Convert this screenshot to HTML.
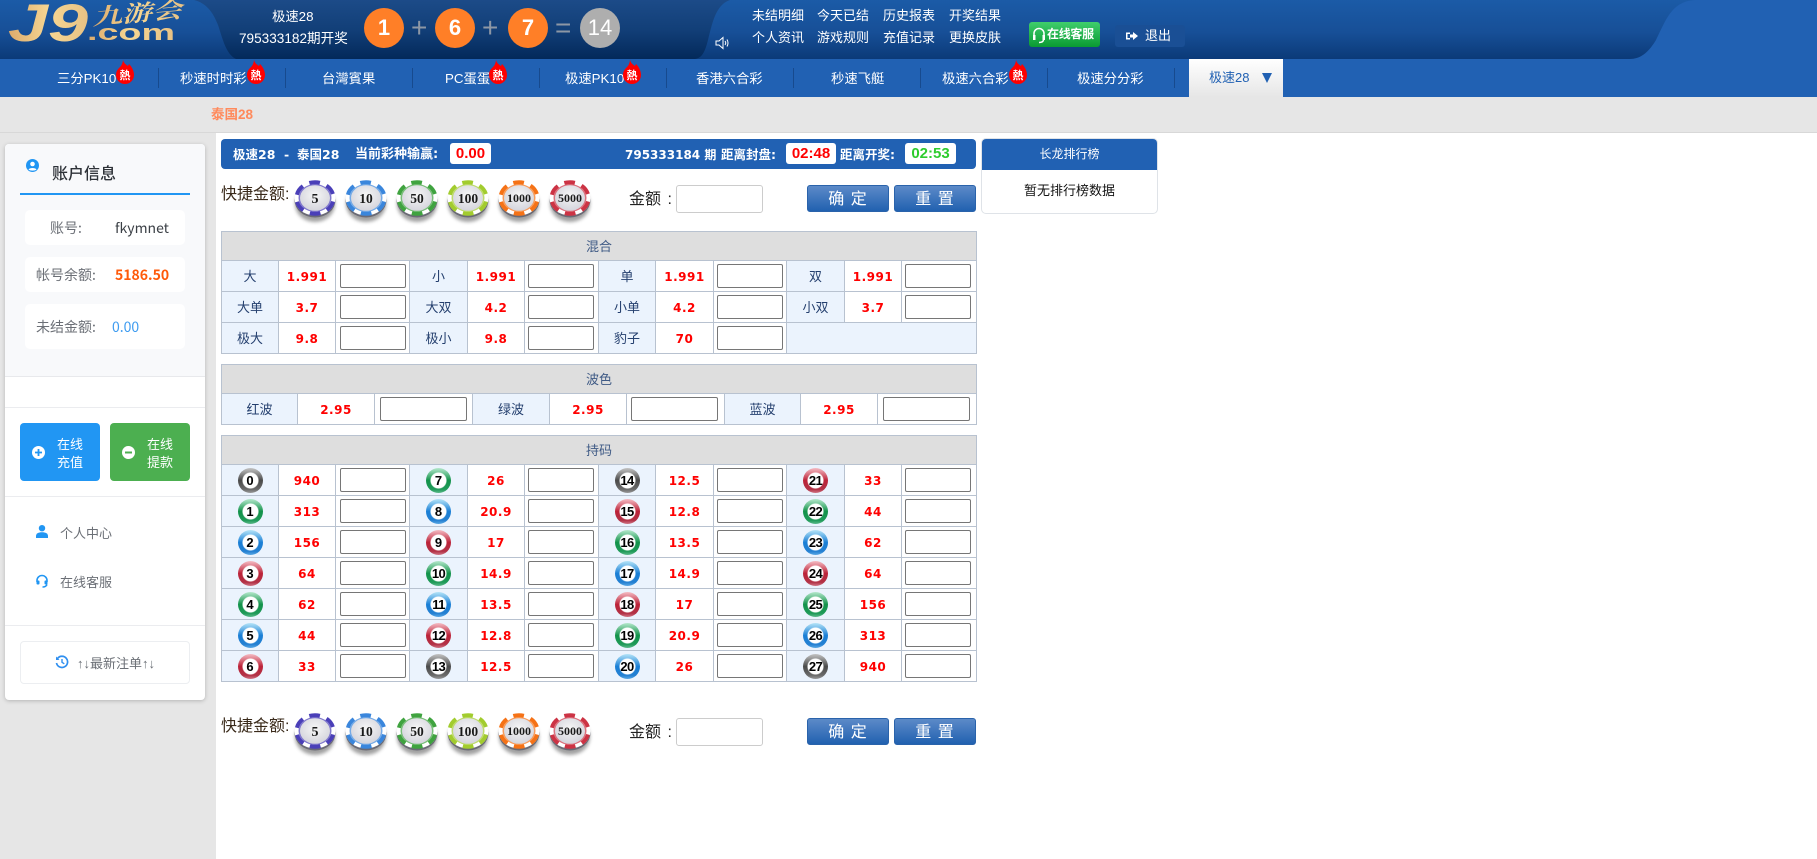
<!DOCTYPE html>
<html lang="zh"><head><meta charset="utf-8"><title>极速28</title>
<style>
*{box-sizing:border-box}
html,body{margin:0;padding:0}
body{width:1817px;height:859px;overflow:hidden;position:relative;background:#e6e6e6;font-family:"Liberation Sans","Noto Sans CJK SC",sans-serif;font-size:13px;color:#333}
.a{position:absolute;white-space:nowrap}
.w{color:#fff}
.hb{position:absolute;top:8px;width:40px;height:40px;border-radius:50%;background:#ff7f27;color:#fff;font:bold 22px/40px "Liberation Sans",sans-serif;text-align:center}
.op{position:absolute;top:10px;color:#8d97a5;font:28px/36px "Liberation Sans",sans-serif}
.tl{font-size:13px;line-height:18px;color:#fff}
.nt{position:absolute;top:70px;font-size:13.33px;line-height:18px;color:#fff;white-space:nowrap}
.sp{position:absolute;top:68px;width:1px;height:20px;background:#174a8e}
.fire{position:absolute;top:59px;width:20px;height:25px}
.fire text{font:bold 11px "Noto Sans CJK SC",sans-serif;fill:#fff;text-anchor:middle}
#main{position:absolute;left:216px;top:133px;width:1601px;height:726px;background:#fff}
#card{position:absolute;left:5px;top:144px;width:200px;height:556px;background:#fff;border-radius:4px;box-shadow:0 1px 4px rgba(0,0,0,.22)}
#cardtop{position:absolute;left:0;top:0;width:200px;height:233px;background:#f8f9fb;border-radius:4px 4px 0 0;border-bottom:1px solid #e8e9ec}
.hl{position:absolute;left:0;width:200px;height:1px;background:#ebecef}
.row{position:absolute;left:25px;width:160px;background:#fff;border-radius:5px}
.sl{position:absolute;font-family:"Noto Sans CJK SC",sans-serif;font-size:14px;line-height:20px;white-space:nowrap;color:#6b6f76}
.tb{position:absolute;left:221px;width:755px;border-collapse:collapse;table-layout:fixed;font-size:13px}
.tb td,.tb th{border:1px solid #b8c2d0;padding:0;height:31px;text-align:center;vertical-align:middle}
.tb th{height:29px;background:#dedede;font-weight:normal;color:#3f5a85;font-size:13px;padding-bottom:2px}
.tb .l{background:#ebf3fd;color:#243f6e;padding-bottom:2px}
.tb .o{color:#f00;font:bold 12px "DejaVu Sans",sans-serif;letter-spacing:.5px;padding-top:1px}
.tb input{display:block;width:66px;height:24px;margin:0 0 0 4px;border:1px solid #767676;border-radius:2px;background:#fff;padding:0}
.tb td:nth-child(n+4) input{margin-left:3px}
.tb.t2 td input{width:87px;margin-left:5px}
.tb.t2 td:nth-child(6) input{margin-left:4px}
.t3 .l{padding-bottom:0}
.b{display:block;width:25px;height:25px;margin:1px auto 0;border-radius:50%;color:#000;font:bold 13px/25px "Liberation Sans",sans-serif;text-align:center}
.b.t{letter-spacing:-.6px}
.g{background:radial-gradient(circle at 50% 50%,#fff 0 7.5px,rgba(255,255,255,0) 8.5px),linear-gradient(#c4c4c4,#4a4a4a 50%,#6a6a6a 85%,#999)}
.n{background:radial-gradient(circle at 50% 50%,#fff 0 7.5px,rgba(255,255,255,0) 8.5px),linear-gradient(#b5e8cc,#12924a 50%,#1f9a58 85%,#5cb98a)}
.u{background:radial-gradient(circle at 50% 50%,#fff 0 7.5px,rgba(255,255,255,0) 8.5px),linear-gradient(#b5e4f8,#1a7fd6 50%,#2480d2 85%,#5aa8e4)}
.r{background:radial-gradient(circle at 50% 50%,#fff 0 7.5px,rgba(255,255,255,0) 8.5px),linear-gradient(#f5bcc4,#bc2238 50%,#b23246 85%,#d07484)}
.chip{position:absolute;width:42px;height:44px;overflow:visible}
.chip text{font:bold 13.5px "Liberation Serif",serif;fill:#1a1a1a;text-anchor:middle}
.qt{position:absolute;left:221px;font-size:16px;line-height:22px;color:#3a2a1a;white-space:nowrap}
.am{position:absolute;left:629px;font-size:16px;line-height:22px;color:#222;white-space:nowrap;word-spacing:2px}
.ai{position:absolute;left:676px;width:87px;height:28px;border:1px solid #ccc;border-radius:3px;background:#fff}
.btn{position:absolute;width:82px;height:27px;border:1px solid #2a63ab;border-radius:3px;background:linear-gradient(#5c8ac8,#2161b0);color:#fff;font-size:16px;line-height:27px;text-align:center;letter-spacing:1px}
.tbox{position:absolute;top:143px;height:21px;background:#fff;border-radius:3px;text-align:center;font:bold 15px/21px "Liberation Sans",sans-serif}
.tt{position:absolute;top:146px;white-space:nowrap;color:#fff;font:bold 12.5px/18px "DejaVu Sans","Noto Sans CJK SC",sans-serif}
</style></head><body>

<svg class="a" style="left:0;top:0" width="1817" height="59" viewBox="0 0 1817 59">
<defs>
<linearGradient id="hg" x1="0" y1="0" x2="0" y2="1"><stop offset="0" stop-color="#1b5ba7"/><stop offset=".55" stop-color="#174f97"/><stop offset="1" stop-color="#0b3a78"/></linearGradient>
<linearGradient id="hd" x1="0" y1="0" x2="0" y2="1"><stop offset="0" stop-color="#1c4b88"/><stop offset=".5" stop-color="#123f78"/><stop offset="1" stop-color="#03295a"/></linearGradient>
<linearGradient id="gold" x1="0" y1="0" x2="1" y2="0"><stop offset="0" stop-color="#dcaa6c"/><stop offset=".5" stop-color="#f6d692"/><stop offset="1" stop-color="#e7c184"/></linearGradient>
</defs>
<rect width="1817" height="59" fill="url(#hg)"/>
<path d="M194 0C206 3 213 12 218 25C223 40 226 54 236 59L695 59C702 58 705 52 708 40C712 25 715 5 730 0Z" fill="url(#hd)"/>
<path d="M1697 0C1672 0 1666 20 1656 40C1650 50 1642 59 1630 59L1817 59L1817 0Z" fill="#2161b3"/>
<text x="8" y="41" font-family="Liberation Sans" font-weight="bold" font-style="italic" font-size="53" fill="url(#gold)" textLength="80" lengthAdjust="spacingAndGlyphs">J9</text>
<text x="92" y="21" font-family="Noto Serif CJK SC" font-weight="bold" font-style="italic" font-size="22" fill="url(#gold)" textLength="90" lengthAdjust="spacingAndGlyphs" transform="rotate(-5 137 14)">九游会</text>
<text x="87" y="40" font-family="Liberation Sans" font-weight="bold" font-size="22" fill="url(#gold)" textLength="88" lengthAdjust="spacingAndGlyphs">.com</text>
</svg>

<div class="a w" style="left:272px;top:8px;font-size:13.33px;line-height:18px">极速28</div>
<div class="a w" style="left:239px;top:30px;font-size:13.6px;line-height:18px">795333182期开奖</div>
<div class="hb" style="left:364px">1</div><div class="op" style="left:411px">+</div>
<div class="hb" style="left:435px">6</div><div class="op" style="left:482px">+</div>
<div class="hb" style="left:508px">7</div><div class="op" style="left:555px">=</div>
<div class="hb" style="left:580px;background:#aeaeae;font-weight:normal">14</div>

<svg class="a" style="left:714px;top:35px" width="16" height="16" viewBox="0 0 16 16" fill="none" stroke="#fff" stroke-width="1"><path d="M2 6H5L9 2.500V13.500L5 10H2Z"/><path d="M11 6Q12.500 8 11 10M13 4.500Q15 8 13 11.500"/></svg>
<div class="a tl" style="left:752px;top:7px">未结明细</div><div class="a tl" style="left:817px;top:7px">今天已结</div><div class="a tl" style="left:883px;top:7px">历史报表</div><div class="a tl" style="left:949px;top:7px">开奖结果</div>
<div class="a tl" style="left:752px;top:29px">个人资讯</div><div class="a tl" style="left:817px;top:29px">游戏规则</div><div class="a tl" style="left:883px;top:29px">充值记录</div><div class="a tl" style="left:949px;top:29px">更换皮肤</div>

<div class="a" style="left:1029px;top:22px;width:71px;height:25px;border-radius:3px;background:linear-gradient(#3fce6c,#0a9a32)"></div>
<svg class="a" style="left:1031px;top:26px" width="16" height="19" viewBox="0 0 16 19" fill="none" stroke="#fff" stroke-width="1.500"><path d="M3 10V7.500A5 5 0 0 1 13 7.500V10"/><rect x="2" y="9" width="2.500" height="5" fill="#fff" stroke="none"/><rect x="11.500" y="9" width="2.500" height="5" fill="#fff" stroke="none"/><path d="M12.500 14Q12 16.500 8 16.500"/></svg>
<div class="a" style="left:1047px;top:26px;color:#fff;font-size:12px;line-height:17px;font-weight:bold;letter-spacing:-.3px">在线客服</div>
<div class="a" style="left:1115px;top:25px;width:70px;height:22px;border-radius:3px;background:#1a4f95"></div>
<svg class="a" style="left:1125px;top:29px" width="14" height="14" viewBox="0 0 14 14" fill="#fff"><path d="M1 3.500H5V5H2.500V9H5V10.500H1Z"/><path d="M5 5.500H8V3L13 7L8 11V8.500H5Z"/></svg>
<div class="a" style="left:1145px;top:27px;color:#fff;font-size:13px;line-height:18px">退出</div>

<div class="a" style="left:0;top:59px;width:1817px;height:38px;background:#2161b3"></div>
<div class="nt" style="left:57px">三分PK10</div>
<div class="nt" style="left:180px">秒速时时彩</div>
<div class="nt" style="left:322px">台灣賓果</div>
<div class="nt" style="left:445px">PC蛋蛋</div>
<div class="nt" style="left:565px">极速PK10</div>
<div class="nt" style="left:696px">香港六合彩</div>
<div class="nt" style="left:831px">秒速飞艇</div>
<div class="nt" style="left:942px">极速六合彩</div>
<div class="nt" style="left:1077px">极速分分彩</div>
<div class="sp" style="left:158px"></div><div class="sp" style="left:285px"></div><div class="sp" style="left:412px"></div><div class="sp" style="left:539px"></div><div class="sp" style="left:666px"></div><div class="sp" style="left:793px"></div><div class="sp" style="left:920px"></div><div class="sp" style="left:1047px"></div><div class="sp" style="left:1174px"></div>

<svg class="fire" style="left:115px" viewBox="0 0 20 25"><path d="M8 0C8 3 10 5 13 7L14 5C17 8 19 12 19 16A9 9 0 0 1 1 16C1 12 3 10 5 8C7 6 8 3 8 0Z" fill="#f00"/><text x="10" y="20">熱</text></svg>
<svg class="fire" style="left:246px" viewBox="0 0 20 25"><path d="M8 0C8 3 10 5 13 7L14 5C17 8 19 12 19 16A9 9 0 0 1 1 16C1 12 3 10 5 8C7 6 8 3 8 0Z" fill="#f00"/><text x="10" y="20">熱</text></svg>
<svg class="fire" style="left:488px" viewBox="0 0 20 25"><path d="M8 0C8 3 10 5 13 7L14 5C17 8 19 12 19 16A9 9 0 0 1 1 16C1 12 3 10 5 8C7 6 8 3 8 0Z" fill="#f00"/><text x="10" y="20">熱</text></svg>
<svg class="fire" style="left:622px" viewBox="0 0 20 25"><path d="M8 0C8 3 10 5 13 7L14 5C17 8 19 12 19 16A9 9 0 0 1 1 16C1 12 3 10 5 8C7 6 8 3 8 0Z" fill="#f00"/><text x="10" y="20">熱</text></svg>
<svg class="fire" style="left:1008px" viewBox="0 0 20 25"><path d="M8 0C8 3 10 5 13 7L14 5C17 8 19 12 19 16A9 9 0 0 1 1 16C1 12 3 10 5 8C7 6 8 3 8 0Z" fill="#f00"/><text x="10" y="20">熱</text></svg>

<div class="a" style="left:1189px;top:59px;width:94px;height:38px;background:linear-gradient(#fff,#e6e6e6)"></div>
<div class="a" style="left:1209px;top:69px;font-size:13px;line-height:18px;color:#2161b3">极速28</div>
<svg class="a" style="left:1262px;top:73px" width="10" height="10"><path d="M0 0H10L5 10Z" fill="#2161b3"/></svg>

<div class="a" style="left:0;top:132px;width:1817px;height:1px;background:#d8d8d8"></div>
<div class="a" style="left:211px;top:106px;font-weight:bold;font-size:13.5px;line-height:18px;color:#ff8a5c">泰国28</div>

<div id="main"></div>

<div id="card">
<div id="cardtop"></div>
<svg class="a" style="left:21px;top:15px" width="13" height="13" viewBox="0 0 13 13"><circle cx="6.500" cy="6.500" r="6.500" fill="#2196f3"/><circle cx="6.500" cy="5" r="2.300" fill="#fff"/><path d="M2.500 10.500C3.500 8.500 9.500 8.500 10.500 10.500C9 12 4 12 2.500 10.500Z" fill="#fff"/></svg>
<div class="a" style="left:47px;top:17px;font-family:'Noto Sans CJK SC',sans-serif;font-size:16px;line-height:22px;color:#2e3238;font-weight:500">账户信息</div>
<div class="a" style="left:15px;top:49px;width:170px;height:2px;background:#2196f3"></div>
<div class="row" style="left:20px;top:66px;height:35px"></div>
<div class="row" style="left:20px;top:113px;height:35px"></div>
<div class="row" style="left:20px;top:160px;height:45px"></div>
<div class="sl" style="left:45px;top:74px">账号:</div>
<div class="sl" style="left:110px;top:74px;color:#3a3f45">fkymnet</div>
<div class="sl" style="left:31px;top:121px">帐号余额:</div>
<div class="sl" style="left:110px;top:121px;color:#ff5a0a;font-weight:bold">5186.50</div>
<div class="sl" style="left:31px;top:173px">未结金额:</div>
<div class="sl" style="left:107px;top:173px;color:#3f9cf0">0.00</div>
<div class="hl" style="top:263px"></div>
<div class="a" style="left:15px;top:279px;width:80px;height:58px;background:#2196f3;border-radius:4px"></div>
<div class="a" style="left:105px;top:279px;width:80px;height:58px;background:#4caf50;border-radius:4px"></div>
<svg class="a" style="left:27px;top:302px" width="13" height="13" viewBox="0 0 13 13"><circle cx="6.500" cy="6.500" r="6.500" fill="#fff"/><path d="M6.500 3V10M3 6.500H10" stroke="#2196f3" stroke-width="1.800"/></svg>
<svg class="a" style="left:117px;top:302px" width="13" height="13" viewBox="0 0 13 13"><circle cx="6.500" cy="6.500" r="6.500" fill="#fff"/><path d="M3 6.500H10" stroke="#4caf50" stroke-width="2"/></svg>
<div class="a" style="left:52px;top:291px;width:30px;color:#fff;font-family:'Noto Sans CJK SC',sans-serif;font-size:13px;line-height:18px;white-space:normal">在线<br>充值</div>
<div class="a" style="left:142px;top:291px;width:30px;color:#fff;font-family:'Noto Sans CJK SC',sans-serif;font-size:13px;line-height:18px;white-space:normal">在线<br>提款</div>
<div class="hl" style="top:352px"></div>
<svg class="a" style="left:31px;top:381px" width="12" height="13" viewBox="0 0 12 13" fill="#2196f3"><circle cx="6" cy="3.200" r="3.200"/><path d="M0 13V11C0 8.500 2.500 7.300 6 7.300C9.500 7.300 12 8.500 12 11V13Z"/></svg>
<div class="a" style="left:55px;top:380px;font-family:'Noto Sans CJK SC',sans-serif;font-size:13px;line-height:18px;color:#6b6f76">个人中心</div>
<svg class="a" style="left:30px;top:430px" width="14" height="14" viewBox="0 0 14 14" fill="none" stroke="#2196f3" stroke-width="1.600"><path d="M2 8V6.500A5 5 0 0 1 12 6.500V8"/><rect x="1.500" y="6.500" width="3" height="4" rx="1" fill="#2196f3" stroke="none"/><rect x="9.500" y="6.500" width="3" height="4" rx="1" fill="#2196f3" stroke="none"/><path d="M12 10.500Q11 13 7.500 13"/></svg>
<div class="a" style="left:55px;top:429px;font-family:'Noto Sans CJK SC',sans-serif;font-size:13px;line-height:18px;color:#6b6f76">在线客服</div>
<div class="hl" style="top:481px"></div>
<div class="a" style="left:15px;top:497px;width:170px;height:43px;border:1px solid #eceef1;border-radius:4px"></div>
<svg class="a" style="left:50px;top:511px" width="14" height="14" viewBox="0 0 14 14" fill="none" stroke="#2f8ff0" stroke-width="1.700"><path d="M2.500 3.500A5.600 5.600 0 1 1 1.500 8"/><path d="M1 1.500V5H4.500" fill="#2f8ff0" stroke="none"/><path d="M7 4V7.300L9.300 8.800" stroke-width="1.400"/></svg>
<div class="a" style="left:72px;top:510px;font-family:'Noto Sans CJK SC',sans-serif;font-size:13px;line-height:18px;color:#6b6f76"><span style="font-family:'Liberation Sans',sans-serif">↑↓</span>最新注单<span style="font-family:'Liberation Sans',sans-serif">↑↓</span></div>
</div>

<!-- top bar -->
<div class="a" style="left:221px;top:139px;width:755px;height:30px;background:#2161b3;border-radius:4px"></div>
<div class="tt" style="left:233px">极速28</div>
<div class="tt" style="left:284px">-</div>
<div class="tt" style="left:297px">泰国28</div>
<div class="tt" style="left:355px;font-size:13px">当前彩种输赢:</div>
<div class="tbox" style="left:450px;width:41px;color:#f00">0.00</div>
<div class="tt" style="left:625px;font-size:12px">795333184 期</div>
<div class="tt" style="left:721px">距离封盘:</div>
<div class="tbox" style="left:786px;width:50px;color:#f00">02:48</div>
<div class="tt" style="left:840px">距离开奖:</div>
<div class="tbox" style="left:905px;width:51px;color:#2ecc2e">02:53</div>

<!-- right panel -->
<div class="a" style="left:981px;top:138px;width:177px;height:76px;background:#fff;border:1px solid #dfe3e8;border-radius:5px;overflow:hidden"><div style="height:31px;background:#2161b3;color:#fff;text-align:center;font-size:12px;line-height:30px">长龙排行榜</div><div style="text-align:center;color:#111;font-size:13px;line-height:20px;margin-top:11px">暂无排行榜数据</div></div>

<!-- chip def -->
<svg width="0" height="0" style="position:absolute"><defs>
<radialGradient id="cf" cx=".5" cy=".4" r=".7"><stop offset="0" stop-color="#f6f6f6"/><stop offset="1" stop-color="#cfcfd8"/></radialGradient>
<filter id="bl" x="-20%" y="-20%" width="140%" height="140%"><feGaussianBlur stdDeviation="1.800"/></filter>
<symbol id="c" viewBox="0 0 42 44" overflow="visible">
<ellipse cx="21" cy="24" rx="20" ry="18" fill="#555" opacity=".55" filter="url(#bl)"/>
<ellipse cx="21" cy="20" rx="20.500" ry="17.500" fill="#6a6a75"/>
<ellipse cx="21" cy="18" rx="20.500" ry="17.500" fill="#fff"/>
<ellipse cx="21" cy="18" rx="18.500" ry="15.800" fill="none" stroke="currentColor" stroke-width="4" pathLength="60" stroke-dasharray="6 4" stroke-dashoffset="-2"/>
<ellipse cx="21" cy="18" rx="16.500" ry="14" fill="currentColor" opacity=".7"/>
<ellipse cx="21" cy="18" rx="15" ry="12.800" fill="url(#cf)"/>
</symbol></defs></svg>

<div class="qt" style="top:184px">快捷金额:</div>
<svg class="chip" style="left:294px;top:180px;color:#4a3fb8"><use href="#c"/><text x="21" y="23" style="font-size:14px">5</text></svg>
<svg class="chip" style="left:345px;top:180px;color:#3a86dc"><use href="#c"/><text x="21" y="23">10</text></svg>
<svg class="chip" style="left:396px;top:180px;color:#3fa33f"><use href="#c"/><text x="21" y="23">50</text></svg>
<svg class="chip" style="left:447px;top:180px;color:#a2cc2e"><use href="#c"/><text x="21" y="23">100</text></svg>
<svg class="chip" style="left:498px;top:180px;color:#f57216"><use href="#c"/><text x="21" y="22" style="font-size:12px">1000</text></svg>
<svg class="chip" style="left:549px;top:180px;color:#cc3344"><use href="#c"/><text x="21" y="22" style="font-size:12px">5000</text></svg>
<div class="am" style="top:189px">金额 :</div>
<div class="ai" style="top:185px"></div>
<div class="btn" style="left:807px;top:185px">确 定</div>
<div class="btn" style="left:894px;top:185px">重 置</div>

<!-- table 1 -->
<table class="tb" style="top:231px"><colgroup><col style="width:57px"><col style="width:57px"><col style="width:74px"><col style="width:58px"><col style="width:57px"><col style="width:74px"><col style="width:57px"><col style="width:58px"><col style="width:73px"><col style="width:58px"><col style="width:57px"><col style="width:75px"></colgroup>
<tr><th colspan="12">混合</th></tr>
<tr><td class="l">大</td><td class="o">1.991</td><td><input></td><td class="l">小</td><td class="o">1.991</td><td><input></td><td class="l">单</td><td class="o">1.991</td><td><input></td><td class="l">双</td><td class="o">1.991</td><td><input></td></tr>
<tr><td class="l">大单</td><td class="o">3.7</td><td><input></td><td class="l">大双</td><td class="o">4.2</td><td><input></td><td class="l">小单</td><td class="o">4.2</td><td><input></td><td class="l">小双</td><td class="o">3.7</td><td><input></td></tr>
<tr><td class="l">极大</td><td class="o">9.8</td><td><input></td><td class="l">极小</td><td class="o">9.8</td><td><input></td><td class="l">豹子</td><td class="o">70</td><td><input></td><td class="l" colspan="3"></td></tr>
</table>

<!-- table 2 -->
<table class="tb t2" style="top:364px"><colgroup><col style="width:76px"><col style="width:77px"><col style="width:98px"><col style="width:77px"><col style="width:77px"><col style="width:98px"><col style="width:76px"><col style="width:77px"><col style="width:99px"></colgroup>
<tr><th colspan="9">波色</th></tr>
<tr><td class="l">红波</td><td class="o">2.95</td><td><input></td><td class="l">绿波</td><td class="o">2.95</td><td><input></td><td class="l">蓝波</td><td class="o">2.95</td><td><input></td></tr>
</table>

<!-- table 3 -->
<table class="tb t3" style="top:435px"><colgroup><col style="width:57px"><col style="width:57px"><col style="width:74px"><col style="width:58px"><col style="width:57px"><col style="width:74px"><col style="width:57px"><col style="width:58px"><col style="width:73px"><col style="width:58px"><col style="width:57px"><col style="width:75px"></colgroup>
<tr><th colspan="12">持码</th></tr>
<tr><td class="l"><span class="b g">0</span></td><td class="o">940</td><td><input></td><td class="l"><span class="b n">7</span></td><td class="o">26</td><td><input></td><td class="l"><span class="b g t">14</span></td><td class="o">12.5</td><td><input></td><td class="l"><span class="b r t">21</span></td><td class="o">33</td><td><input></td></tr>
<tr><td class="l"><span class="b n">1</span></td><td class="o">313</td><td><input></td><td class="l"><span class="b u">8</span></td><td class="o">20.9</td><td><input></td><td class="l"><span class="b r t">15</span></td><td class="o">12.8</td><td><input></td><td class="l"><span class="b n t">22</span></td><td class="o">44</td><td><input></td></tr>
<tr><td class="l"><span class="b u">2</span></td><td class="o">156</td><td><input></td><td class="l"><span class="b r">9</span></td><td class="o">17</td><td><input></td><td class="l"><span class="b n t">16</span></td><td class="o">13.5</td><td><input></td><td class="l"><span class="b u t">23</span></td><td class="o">62</td><td><input></td></tr>
<tr><td class="l"><span class="b r">3</span></td><td class="o">64</td><td><input></td><td class="l"><span class="b n t">10</span></td><td class="o">14.9</td><td><input></td><td class="l"><span class="b u t">17</span></td><td class="o">14.9</td><td><input></td><td class="l"><span class="b r t">24</span></td><td class="o">64</td><td><input></td></tr>
<tr><td class="l"><span class="b n">4</span></td><td class="o">62</td><td><input></td><td class="l"><span class="b u t">11</span></td><td class="o">13.5</td><td><input></td><td class="l"><span class="b r t">18</span></td><td class="o">17</td><td><input></td><td class="l"><span class="b n t">25</span></td><td class="o">156</td><td><input></td></tr>
<tr><td class="l"><span class="b u">5</span></td><td class="o">44</td><td><input></td><td class="l"><span class="b r t">12</span></td><td class="o">12.8</td><td><input></td><td class="l"><span class="b n t">19</span></td><td class="o">20.9</td><td><input></td><td class="l"><span class="b u t">26</span></td><td class="o">313</td><td><input></td></tr>
<tr><td class="l"><span class="b r">6</span></td><td class="o">33</td><td><input></td><td class="l"><span class="b g t">13</span></td><td class="o">12.5</td><td><input></td><td class="l"><span class="b u t">20</span></td><td class="o">26</td><td><input></td><td class="l"><span class="b g t">27</span></td><td class="o">940</td><td><input></td></tr>
</table>

<!-- bottom row -->
<div class="qt" style="top:716px">快捷金额:</div>
<svg class="chip" style="left:294px;top:713px;color:#4a3fb8"><use href="#c"/><text x="21" y="23" style="font-size:14px">5</text></svg>
<svg class="chip" style="left:345px;top:713px;color:#3a86dc"><use href="#c"/><text x="21" y="23">10</text></svg>
<svg class="chip" style="left:396px;top:713px;color:#3fa33f"><use href="#c"/><text x="21" y="23">50</text></svg>
<svg class="chip" style="left:447px;top:713px;color:#a2cc2e"><use href="#c"/><text x="21" y="23">100</text></svg>
<svg class="chip" style="left:498px;top:713px;color:#f57216"><use href="#c"/><text x="21" y="22" style="font-size:12px">1000</text></svg>
<svg class="chip" style="left:549px;top:713px;color:#cc3344"><use href="#c"/><text x="21" y="22" style="font-size:12px">5000</text></svg>
<div class="am" style="top:722px">金额 :</div>
<div class="ai" style="top:718px"></div>
<div class="btn" style="left:807px;top:718px">确 定</div>
<div class="btn" style="left:894px;top:718px">重 置</div>

</body></html>
